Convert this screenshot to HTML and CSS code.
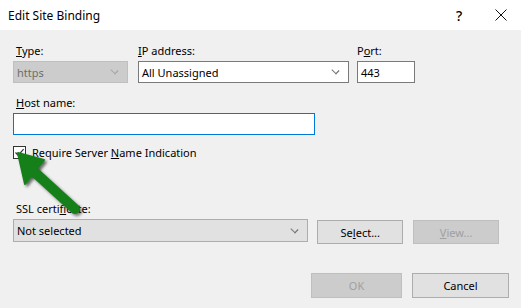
FILE: index.html
```html
<html>
  <head>
    <title>Edit Site Binding</title>
    <link rel="stylesheet" href="styles.css">
  </head>
  <body>
    <div class="dialog">
      <header class="titlebar">
        <span class="title">Edit Site Binding</span>
        <span class="help">?</span>
        <span class="close">
          <svg width="12" height="12" viewBox="0 0 12 12">
            <path d="M0.5 0.5 L11.5 11.5 M11.5 0.5 L0.5 11.5" stroke="#111" stroke-width="1" fill="none" />
          </svg>
        </span>
      </header>

      <main class="content">
        <div class="row top-row">
          <div class="field type-field">
            <label class="inset"><u>T</u>ype:</label>
            <div class="select disabled">
              <span>https</span>
              <span class="caret"></span>
            </div>
          </div>
          <div class="field ip-field">
            <label><u>I</u>P address:</label>
            <div class="select">
              <span>All Unassigned</span>
              <span class="caret"></span>
            </div>
          </div>
          <div class="field port-field">
            <label>P<u>o</u>rt:</label>
            <div class="textbox">443</div>
          </div>
        </div>

        <div class="field host-field">
          <label class="inset"><u>H</u>ost name:</label>
          <div class="textbox focused"></div>
        </div>

        <div class="check-row">
          <span class="checkbox">
            <svg width="11" height="11" viewBox="0 0 11 11">
              <path d="M1.5 5.5 L4.2 8.3 L9.6 2.2" stroke="#333" stroke-width="1.2" fill="none" />
            </svg>
          </span>
          <span>Require Server <u>N</u>ame Indication</span>
        </div>

        <div class="field ssl-field">
          <label class="inset">SSL certi<u>f</u>icate:</label>
          <div class="ssl-row">
            <div class="select combo">
              <span>Not selected</span>
              <span class="caret"></span>
            </div>
            <button class="btn">Se<u>l</u>ect...</button>
            <button class="btn disabled"><u>V</u>iew...</button>
          </div>
        </div>

        <footer class="actions">
          <button class="btn disabled ok">OK</button>
          <button class="btn cancel">Cancel</button>
        </footer>
      </main>

      <!-- annotation arrow -->
      <svg class="arrow" width="521" height="308" viewBox="0 0 521 308">
        <defs>
          <filter id="shadow" x="-20%" y="-20%" width="140%" height="140%">
            <feGaussianBlur stdDeviation="1.6" />
          </filter>
        </defs>
        <g fill="rgba(0,0,0,0.5)" stroke="rgba(0,0,0,0.5)" filter="url(#shadow)" transform="translate(2,2)">
          <polygon points="18,153 44,160 25,184" stroke-width="2" stroke-linejoin="round" />
          <line x1="30" y1="168" x2="75" y2="209" stroke-width="10" stroke-linecap="round" />
        </g>
        <g fill="#15801a" stroke="#15801a">
          <polygon points="18,153 44,160 25,184" stroke-width="2" stroke-linejoin="round" />
          <line x1="30" y1="168" x2="75" y2="209" stroke-width="10" stroke-linecap="round" />
        </g>
      </svg>
    </div>
  </body>
</html>
```

FILE: styles.css
```css
html,
body {
  padding: 0;
  margin: 0;
  font-family: "Noto Sans", sans-serif;
  font-size: 11px;
  color: #000;
}

body {
  background: #f0f0f0;
}

.dialog {
  position: relative;
  width: 521px;
  height: 308px;
  overflow: hidden;
}

.titlebar {
  display: flex;
  align-items: center;
  height: 30px;
  padding-left: 8px;
  background: #fff;
  font-size: 12px;
}

.title {
  flex: 1;
}

.help {
  width: 16px;
  margin-right: 23px;
  font-size: 14px;
  font-weight: 500;
}

.close {
  display: flex;
  width: 12px;
  margin-right: 14px;
}

.content {
  padding: 13px 12px 0 13px;
}

label {
  display: block;
  height: 15px;
  line-height: 15px;
  margin: 0 0 3px 0;
}

label.inset {
  margin-left: 3px;
}

.row {
  display: flex;
}

.type-field {
  width: 115px;
  margin-right: 10px;
}

.ip-field {
  width: 211px;
  margin-right: 8px;
}

.port-field {
  width: 58px;
}

.select,
.textbox {
  display: flex;
  align-items: center;
  box-sizing: border-box;
  height: 22px;
  padding: 0 7px 0 3px;
  background: #fff;
  border: 1px solid #7a7a7a;
}

.select span:first-child {
  flex: 1;
}

.caret {
  width: 4px;
  height: 4px;
  margin: 0 3px 3px 0;
  border-right: 1px solid #777;
  border-bottom: 1px solid #777;
  transform: rotate(45deg) scaleX(1.3);
}

.select.disabled {
  background: #cccccc;
  border-color: #bfbfbf;
  color: #6d6d6d;
}

.select.disabled .caret {
  border-color: #a8a8a8;
}

.host-field {
  width: 302px;
  margin-top: 12px;
}

.textbox.focused {
  border-color: #0078d7;
}

.check-row {
  display: flex;
  align-items: center;
  gap: 6px;
  margin-top: 11px;
  height: 13px;
}

.checkbox {
  display: flex;
  align-items: center;
  justify-content: center;
  box-sizing: border-box;
  width: 13px;
  height: 13px;
  background: #fff;
  border: 1px solid #333;
}

.ssl-field {
  margin-top: 42px;
}

.ssl-row {
  display: flex;
  align-items: flex-start;
}

.combo {
  width: 296px;
  height: 23px;
  margin-right: 9px;
  background: #e1e1e1;
  border-color: #adadad;
}

.btn {
  box-sizing: border-box;
  width: 86px;
  height: 24px;
  margin: 1px 10px 0 0;
  padding: 0;
  font-family: inherit;
  font-size: 11px;
  color: #000;
  background: #e1e1e1;
  border: 1px solid #adadad;
}

.btn.disabled {
  color: #a0a0a0;
  background: #cccccc;
  border-color: #bfbfbf;
}

.actions {
  display: flex;
  justify-content: flex-end;
  margin-top: 29px;
}

.actions .btn {
  height: 25px;
  margin: 0;
}

.ok {
  width: 91px;
  margin-right: 10px !important;
}

.cancel {
  width: 97px;
}

.arrow {
  position: absolute;
  top: 0;
  left: 0;
  pointer-events: none;
}
```
